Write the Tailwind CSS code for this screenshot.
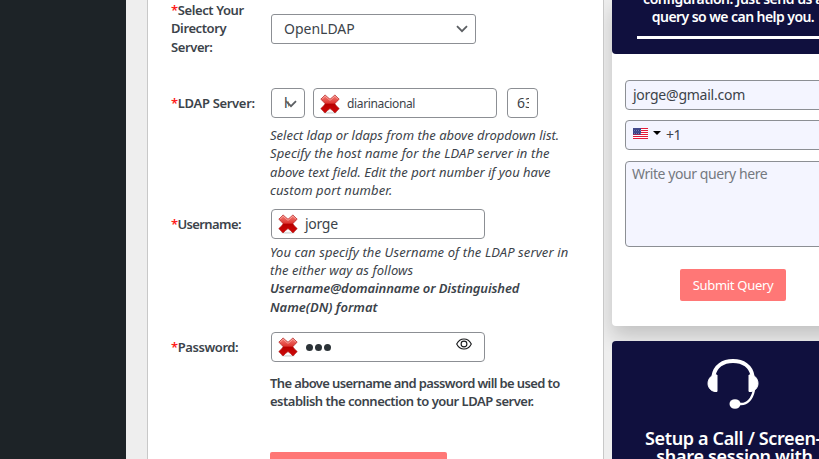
<!DOCTYPE html>
<html lang="en">
<head>
<meta charset="utf-8">
<title>LDAP Configuration</title>
<script src="https://cdn.jsdelivr.net/npm/@tailwindcss/browser@4"></script>
</head>
<body class="w-[819px] h-[459px] overflow-hidden bg-[#eeeeee] font-['Noto_Sans',sans-serif] text-[13px] leading-[18.3px] text-[#3c434a] whitespace-nowrap">
<svg width="0" height="0" class="absolute">
  <defs>
    <linearGradient id="red" x1="0" y1="0" x2="0" y2="1"><stop offset="0" stop-color="#f4847c"/><stop offset=".45" stop-color="#df3631"/><stop offset=".52" stop-color="#b80000"/><stop offset="1" stop-color="#d00808"/></linearGradient>
    <symbol id="cross" viewBox="0 0 20 20">
      <ellipse cx="10" cy="18.8" rx="7" ry="1" fill="#ddd"/>
      <path d="M5.200 .9Q7.500 3.500 10 5.200 12.500 3.500 14.800 .9L19.200 5.200Q16.500 7.500 14.800 9.800 16.500 12.500 19.200 14.600L15 18.900Q12.500 16.300 10 14.600 7.500 16.300 5 18.900L.8 14.600Q3.500 12.500 5.200 9.800 3.500 7.500 .8 5.200Z" fill="url(#red)" stroke="#b01818" stroke-width=".7" stroke-linejoin="round"/>
      <path d="M2 5.300 5.200 2.100Q7.500 4.700 10 6.300 12.500 4.700 14.800 2.100L18 5.300" fill="none" stroke="#ffb9b2" stroke-width=".7"/>
    </symbol>
    <symbol id="chevron" viewBox="0 0 12 8"><path d="M1 1.200 6 6.200 11 1.200" fill="none" stroke="#5c5f63" stroke-width="1.800"/></symbol>
  </defs>
</svg>
<div class="flex h-[459px] w-[819px] overflow-hidden">
  <aside class="w-[126px] shrink-0 bg-[#1d2327]"></aside>
  <main class="relative z-10 ml-[21px] w-[457px] shrink-0 border-x border-[#c8c8c8] bg-white pl-[23px]">
    <section class="flex h-[88px]">
      <div class="w-[100px] pt-[1px] font-semibold leading-[18.4px] tracking-[-0.4px]"><div><span class="text-[#ff1a1a]">*</span>Select Your</div><div>Directory</div><div>Server:</div></div>
      <div class="mt-[14px] flex h-[30px] w-[205px] items-center justify-between rounded-[3px] border border-[#8c8f94] pr-[7px] pl-3 text-sm">
        <span>OpenLDAP</span><svg class="h-2 w-3"><use href="#chevron"/></svg>
      </div>
    </section>
    <section class="flex h-[121px]">
      <div class="w-[100px] pt-[6px] font-semibold tracking-[-0.32px]"><span class="text-[#ff1a1a]">*</span>LDAP Server:</div>
      <div>
        <div class="flex">
          <div class="relative flex h-[30px] w-[34px] items-center rounded-[4px] border border-[#8c8f94] pl-3 text-sm"><span class="w-[5px] overflow-hidden">ldap</span><svg class="absolute top-[11px] left-[13px] h-2 w-3"><use href="#chevron"/></svg></div>
          <div class="ml-2 flex h-[30px] w-[184px] items-center rounded-[4px] border border-[#8c8f94] pt-[1px] pl-[6px] text-xs tracking-[-0.36px]"><svg class="mr-[7px] h-5 w-5"><use href="#cross"/></svg>diarinacional</div>
          <div class="ml-[10px] flex h-[30px] w-[31px] items-center rounded-[4px] border border-[#8c8f94] pl-[9px] text-sm"><span class="w-[12px] overflow-hidden">636</span></div>
        </div>
        <div class="mt-[8px] -ml-px leading-[18.4px] italic"><div>Select ldap or ldaps from the above dropdown list.</div><div class="tracking-[0.1px]">Specify the host name for the LDAP server in the</div><div>above text field. Edit the port number if you have</div><div class="tracking-[0.1px]">custom port number.</div></div>
      </div>
    </section>
    <section class="flex h-[123px]">
      <div class="w-[100px] pt-[6px] font-semibold tracking-[-0.62px]"><span class="text-[#ff1a1a]">*</span>Username:</div>
      <div>
        <div class="flex h-[30px] w-[214px] items-center rounded-[4px] border border-[#8c8f94] pl-[6px] text-sm tracking-[-0.3px]"><svg class="mr-[7px] h-5 w-5"><use href="#cross"/></svg>jorge</div>
        <div class="mt-[4px] -ml-px leading-[18.2px] italic"><div class="tracking-[0.1px]">You can specify the Username of the LDAP server in</div><div class="tracking-[0.08px]">the either way as follows</div><div class="font-semibold tracking-[-0.12px]">Username@domainname or Distinguished</div><div class="font-semibold">Name(DN) format</div></div>
      </div>
    </section>
    <section class="flex h-[120px]">
      <div class="w-[100px] pt-[6px] font-semibold tracking-[-0.42px]"><span class="text-[#ff1a1a]">*</span>Password:</div>
      <div>
        <div class="flex h-[30px] w-[214px] items-center rounded-[4px] border border-[#8c8f94] pl-[6px]"><svg class="mr-[8px] h-5 w-5"><use href="#cross"/></svg>
          <div class="flex gap-[2px]"><i class="h-[7px] w-[7px] rounded-full bg-[#2c3338]"></i><i class="h-[7px] w-[7px] rounded-full bg-[#2c3338]"></i><i class="h-[7px] w-[7px] rounded-full bg-[#2c3338]"></i></div>
          <svg class="mb-[7px] ml-auto mr-[12px] h-3 w-4" viewBox="0 0 16 12" fill="none" stroke="#17191b" stroke-width="1.1"><path d="M.7 6C4-.7 12-.7 15.3 6 12 12.7 4 12.7.7 6Z"/><circle cx="8" cy="6" r="2.900"/></svg>
        </div>
        <div class="mt-[12px] -ml-px font-semibold tracking-[-0.62px]"><div>The above username and password will be used to</div><div class="tracking-[-0.5px]">establish the connection to your LDAP server.</div></div>
      </div>
    </section>
    <div class="ml-[99px] h-[7px] w-[177px] rounded-t-[2px] bg-[#ff7776]"></div>
  </main>
  <aside class="ml-2 w-[242px] shrink-0">
    <div class="h-[326px] rounded-b-[4px] bg-white shadow-[0_10px_20px_rgba(0,0,0,0.19)]">
      <header class="h-[54px] overflow-hidden rounded-b-[4px] bg-[#10103e] text-center text-sm font-semibold text-white">
        <div class="-mt-[10px] leading-[18px] tracking-[-0.56px]"><div class="tracking-[-0.48px]">configuration. Just send us a</div><div>query so we can help you.</div></div>
        <div class="mx-[25px] mt-[10px] h-[3px] bg-white"></div>
      </header>
      <div class="pt-[26px] pl-[13px] text-sm">
        <div class="flex h-[30px] w-[216px] items-center rounded-[4px] border border-[#8c8f94] bg-[#f4f5ff] pl-[7px] tracking-[-0.24px]">jorge@gmail.com</div>
        <div class="mt-[10px] flex h-[30px] w-[216px] items-center rounded-[4px] border border-[#8c8f94] bg-[#f4f5ff] pl-2">
          <svg class="-mt-[3px] -ml-px h-[11px] w-[15px]" viewBox="0 0 15 11"><path fill="#fff" d="M0 0h15v11H0z"/><path d="M0 .5h15M0 2.500h15M0 4.500h15M0 6.500h15M0 8.500h15M0 10.500h15" stroke="#e51937"/><path fill="#343a80" d="M0 0h8v6.500H0z"/><path d="M.5 1h7M1 2.500h7M.5 4h7M1 5.500h7" stroke="#9096c4" stroke-width=".7" stroke-dasharray="1 1"/></svg>
          <svg class="-mt-[4px] ml-[5px] h-1 w-2" viewBox="0 0 8 4"><path d="M0 0h8L4 4Z"/></svg>
          <span class="ml-[5px] tracking-[-0.4px]">+1</span>
        </div>
        <div class="mt-[11px] h-[86px] w-[216px] rounded-[4px] border border-[#8c8f94] bg-[#f4f5ff] pt-[2px] pl-[6px] tracking-[-0.43px] text-[#757980]">Write your query here</div>
        <div class="mt-[22px] ml-[55px] flex h-8 w-[106px] items-center justify-center rounded-[2px] bg-[#ff7776] text-[13px] tracking-[-0.3px] text-white">Submit Query</div>
      </div>
    </div>
    <div class="relative mt-[15px] h-[118px] rounded-t-[4px] bg-[#10103e] pt-[17px] text-center text-lg leading-[18px] font-semibold text-white">
      <svg class="mx-auto h-[52px] w-[52px]" viewBox="0 0 52 52" fill="none" stroke="#fff"><path d="M6.500 18C8 8 16 3 26 3S44 8 45.500 18" stroke-width="4"/><path d="M47 32C45 41 41 46 34 46H29" stroke-width="2.300"/><path d="M7 17H10V33.500H8C3.500 33 1 29 1 25.500S3 18 7 17ZM45 17H42V33.500H44C48.500 33 51 29 51 25.500S49 18 45 17Z" fill="#fff" stroke-width="1"/><ellipse cx="28" cy="46" rx="5.500" ry="4.800" fill="#fff" stroke="none"/></svg>
      <div class="mt-[19px] tracking-[-0.3px]"><div class="tracking-[-0.36px]">Setup a Call / Screen-</div><div class="pl-[3px]">share session with</div></div>
    </div>
  </aside>
</div>
</body>
</html>
